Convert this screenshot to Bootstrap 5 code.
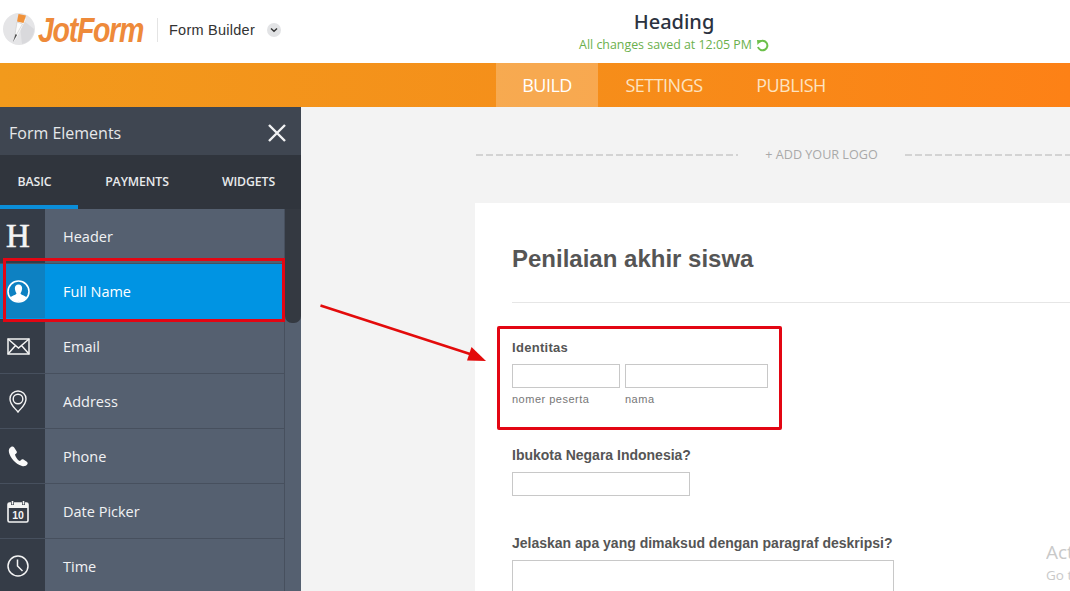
<!DOCTYPE html>
<html lang="en">
<head>
<meta charset="utf-8">
<title>JotForm Form Builder</title>
<link rel="stylesheet" href="https://cdn.jsdelivr.net/npm/bootstrap@5.3.0/dist/css/bootstrap.min.css">
<style>
html,body{height:591px;overflow:hidden}
body{font-family:"Open Sans","Noto Sans",sans-serif;background:#f3f3f3;position:relative}
.top-head{height:63px;background:#fff}
.brand-zone{width:296px;padding-left:2px;padding-bottom:4px}
.logo-word{font:italic 700 35px/1 "Liberation Sans",sans-serif;color:#ee8a3a;letter-spacing:-1.6px;margin-left:3px;width:107px;white-space:nowrap;transform:scaleX(.815);transform-origin:left center}
.brand-sep{width:1px;height:24px;background:#e4e4e4;margin:0 11px 0 12px}
.builder-label{font:14.5px "Liberation Sans",sans-serif;color:#333;letter-spacing:.25px}
.chev-dot{width:14px;height:14px;border-radius:50%;background:#e2e3e5;margin-left:12px}
.title-zone{width:756px;text-align:center}
.form-heading{font:500 20px/24px "Noto Sans",sans-serif;color:#2b3240;margin-top:10px}
.saved-note{font-size:12.4px;line-height:18px;color:#6ab04c;margin-top:2px}
.orange-bar{height:44px;background:linear-gradient(90deg,#f29a1c,#f58f1a 50%,#fd8116);padding-left:496px}
.orange-bar .nav-link{font-size:18px;line-height:44px;padding:0;color:#fde3c0;height:44px;text-align:center;letter-spacing:-.5px}
.orange-bar .nav-link.active{background:rgba(255,255,255,.24);color:#fff;width:102px}
.tab-set{width:132px}.tab-pub{width:122px}
.work-row{height:484px}
.side-panel{width:301px;background:#556070;flex:none}
.panel-title{height:48px;background:#3f4651;padding:3px 15px 0 9px;color:#e6e8ea;font-size:16px}
.panel-tabs{height:54px;background:#30353d}
.panel-tabs a{font-size:12.3px;font-weight:600;color:#e8eaec;text-decoration:none;height:54px;line-height:54px;text-align:center;letter-spacing:-.1px}
.panel-tabs .tab-basic{width:78px;border-bottom:4px solid #0b8ed9;padding-right:9px;line-height:54px}
.tab-pay{width:118px}.tab-wid{width:105px}
.elem-list{position:relative}
.elem-row{height:55px;background:transparent;border:0;border-bottom:1px solid #47505e;border-radius:0!important;padding:0;color:#f1f2f4;font-size:14.5px;width:285px;border-right:1px solid #47505e}
.elem-icon{width:45px;height:100%;background:#353c47;color:#fff;padding-right:9px}
.elem-name{padding-left:18px;padding-top:2px}
.elem-row.active{background:#0094e3;color:#fff;border-color:#0094e3;margin-top:0!important;border-top-width:0!important}
.elem-row.active .elem-icon{background:#0d81c2}
.h-glyph{font:400 33px/1 "Liberation Serif",serif;color:#f4f4f4;-webkit-text-stroke:.6px #f4f4f4}
.thumb-bar{position:absolute;left:285px;top:0;width:16px;height:114px;background:#343941;border-radius:0 0 7px 7px}
.canvas-area{min-width:0;flex:1;overflow:hidden}
.logo-slot{height:96px;padding-left:175px}
.logo-row{margin-top:38px;height:20px}
.dash-line{height:2px;background:repeating-linear-gradient(90deg,#d3d3d3 0 7px,transparent 7px 10px)}
.dash-a{width:262px}.dash-b{width:170px}
.logo-text{width:167px;text-align:center;font-size:12.6px;color:#a9a9a9;white-space:nowrap}
.paper{margin-left:174px;background:#fff;height:388px;padding:0 0 0 37px;font-family:"Liberation Sans",sans-serif;color:#555}
.paper-title{font-size:24px;font-weight:700;line-height:28px;padding-top:42px;height:100px;margin:0;border-bottom:1px solid #e6e6e6;color:#555}
.q-label{font-size:14px;font-weight:700;line-height:16px;color:#555;margin:0}
.q-one{font-size:13px;letter-spacing:.3px;padding-top:37px}
.input-pair{gap:5px;margin-top:8px}
.box-in{height:24px;border:1px solid #c8c8c8;border-radius:0;padding:0;background:#fff}
.in-a{width:108px}.in-b{width:143px}.in-c{width:178px}.in-d{width:382px;height:60px}
.sub-note{font-size:11px;color:#777;line-height:14px;letter-spacing:.5px;margin-top:4px}
.sub-a{width:113px}
.q-two{padding-top:41px;padding-bottom:9px}
.q-three{padding-top:39px;padding-bottom:9px}
.red-box{position:absolute;border:3px solid #e30613;pointer-events:none;z-index:5}
.box-full{left:3px;top:258px;width:282px;height:64px}
.box-id{left:497px;top:326px;width:285px;height:104px;border-radius:2px}
.point-arrow{position:absolute;left:315px;top:300px;width:180px;height:70px}
.win-mark{position:absolute;left:1046px;top:540px;color:#c9c9c9;white-space:nowrap;font-size:19px;line-height:24px;overflow:hidden;width:24px}
.win-sub{position:absolute;left:1046px;top:566px;color:#c9c9c9;white-space:nowrap;font-size:13.5px;line-height:18px;overflow:hidden;width:24px}
</style>
</head>
<body>
<header class="top-head d-flex">
  <div class="brand-zone d-flex align-items-center">
    <svg width="33" height="33" viewBox="0 0 33 33"><circle cx="17" cy="16" r="16" fill="#e5e5e7"/><path d="M17 4 L32 16 A15 15 0 0 1 20 31 Z" fill="#d9d9dc"/><path d="M18 4 L24 6 L14 26 L12 28 Z" fill="#f7f7f7"/><path d="M16.500 1 L24 2.500 L21.500 10 L15 8.500 Z" fill="#f0923a"/><path d="M15 9 L20.500 11 L12.500 25 Z" fill="#fbfbfb" stroke="#c9c9c9" stroke-width=".6"/><path d="M13.600 21 L15 22 L11 29 Z" fill="#4a4a4a"/></svg>
    <span class="logo-word">JotForm</span>
    <span class="brand-sep"></span>
    <span class="builder-label">Form Builder</span>
    <span class="chev-dot d-flex align-items-center justify-content-center"><svg width="8" height="6" viewBox="0 0 8 6"><path d="M1 1.500 L4 4.300 L7 1.500" fill="none" stroke="#333" stroke-width="1.400"/></svg></span>
  </div>
  <div class="title-zone">
    <div class="form-heading">Heading</div>
    <div class="saved-note d-flex justify-content-center align-items-center gap-1">All changes saved at 12:05 PM
      <svg width="13" height="13" viewBox="0 0 13 13"><path d="M3 3.300 A4.800 4.800 0 1 1 2 8" fill="none" stroke="#6cc04a" stroke-width="2"/><path d="M1 1 L5.500 1.300 L1.500 6 Z" fill="#6cc04a"/></svg>
    </div>
  </div>
</header>

<nav class="orange-bar nav">
  <a class="nav-link active" href="#">BUILD</a>
  <a class="nav-link tab-set" href="#">SETTINGS</a>
  <a class="nav-link tab-pub" href="#">PUBLISH</a>
</nav>

<div class="work-row d-flex">
  <aside class="side-panel">
    <div class="panel-title d-flex align-items-center justify-content-between">
      <span>Form Elements</span>
      <svg width="18" height="18" viewBox="0 0 18 18"><path d="M1 1 L17 17 M17 1 L1 17" stroke="#f2f3f4" stroke-width="2.400"/></svg>
    </div>
    <div class="panel-tabs d-flex">
      <a class="tab-basic" href="#">BASIC</a>
      <a class="tab-pay" href="#">PAYMENTS</a>
      <a class="tab-wid" href="#">WIDGETS</a>
    </div>
    <div class="elem-list">
      <div class="list-group">
        <div class="list-group-item elem-row d-flex align-items-center">
          <span class="elem-icon d-flex align-items-center justify-content-center"><span class="h-glyph">H</span></span>
          <span class="elem-name">Header</span>
        </div>
        <div class="list-group-item elem-row active d-flex align-items-center">
          <span class="elem-icon d-flex align-items-center justify-content-center">
            <svg width="23" height="23" viewBox="0 0 23 23"><circle cx="11.500" cy="11.500" r="10.500" fill="#0d81c2" stroke="#fff" stroke-width="1.600"/><path d="M11.500 4.500 C14.500 4.500 15.500 7 15 9.500 C14.700 11.500 13.800 12.500 13.500 13.500 C14 15 18 15.500 19.500 17.500 A10 10 0 0 1 3.500 17.500 C5 15.500 9 15 9.500 13.500 C9.200 12.500 8.300 11.500 8 9.500 C7.500 7 8.500 4.500 11.500 4.500 Z" fill="#fff"/></svg>
          </span>
          <span class="elem-name">Full Name</span>
        </div>
        <div class="list-group-item elem-row d-flex align-items-center">
          <span class="elem-icon d-flex align-items-center justify-content-center">
            <svg width="23" height="17" viewBox="0 0 23 17" fill="none" stroke="#f4f4f4" stroke-width="1.500"><rect x="1" y="1" width="21" height="15"/><path d="M1 1 L11.500 10 L22 1 M1 16 L8.500 7.500 M22 16 L14.500 7.500"/></svg>
          </span>
          <span class="elem-name">Email</span>
        </div>
        <div class="list-group-item elem-row d-flex align-items-center">
          <span class="elem-icon d-flex align-items-center justify-content-center">
            <svg width="18" height="23" viewBox="0 0 18 23" fill="none" stroke="#f4f4f4" stroke-width="1.400"><path d="M9 22 C6 18 1 15 1 9 A8 8 0 0 1 17 9 C17 15 12 18 9 22 Z"/><circle cx="9" cy="9" r="4.800"/></svg>
          </span>
          <span class="elem-name">Address</span>
        </div>
        <div class="list-group-item elem-row d-flex align-items-center">
          <span class="elem-icon d-flex align-items-center justify-content-center">
            <svg width="20" height="21" viewBox="0 0 20 21"><path d="M3 1 C1 2 0.500 4 1 6.500 C2 11 7 18 14 20 C16 20.600 18.500 20 19.500 18 C20 17 19.500 16.200 18.800 15.700 L15.500 13.500 C14.600 13 13.700 13.200 13 14 L12 15 C10 14.500 7.500 11 7 8.500 L8.200 7.500 C9 6.800 9 6 8.600 5.200 L6 1.200 C5.300 .3 4 .4 3 1 Z" fill="#fafafa"/></svg>
          </span>
          <span class="elem-name">Phone</span>
        </div>
        <div class="list-group-item elem-row d-flex align-items-center">
          <span class="elem-icon d-flex align-items-center justify-content-center">
            <svg width="22" height="23" viewBox="0 0 22 23"><rect x="1" y="3" width="20" height="19" rx="1.500" fill="none" stroke="#f4f4f4" stroke-width="1.600"/><rect x="1" y="3" width="20" height="5" fill="#f4f4f4"/><path d="M5.500 1 V5 M16.500 1 V5" stroke="#353c47" stroke-width="3"/><path d="M5.500 1 V4.500 M16.500 1 V4.500" stroke="#f4f4f4" stroke-width="1.600"/><text x="11" y="19" text-anchor="middle" font-family="Liberation Sans, sans-serif" font-weight="700" font-size="10.500" fill="#f4f4f4">10</text></svg>
          </span>
          <span class="elem-name">Date Picker</span>
        </div>
        <div class="list-group-item elem-row d-flex align-items-center">
          <span class="elem-icon d-flex align-items-center justify-content-center">
            <svg width="22" height="22" viewBox="0 0 22 22" fill="none" stroke="#f4f4f4" stroke-width="1.500"><circle cx="11" cy="11" r="10"/><path d="M10.500 4.500 V11 L15.500 16"/></svg>
          </span>
          <span class="elem-name">Time</span>
        </div>
      </div>
      <div class="thumb-bar"></div>
    </div>
  </aside>

  <main class="canvas-area">
    <div class="logo-slot d-flex align-items-start">
      <div class="logo-row d-flex align-items-center">
        <span class="dash-line dash-a"></span>
        <span class="logo-text">+ ADD YOUR LOGO</span>
        <span class="dash-line dash-b"></span>
      </div>
    </div>
    <section class="paper">
      <h1 class="paper-title">Penilaian akhir siswa</h1>
      <p class="q-label q-one">Identitas</p>
      <div class="input-pair d-flex">
        <input class="box-in in-a" type="text" aria-label="nomer peserta">
        <input class="box-in in-b" type="text" aria-label="nama">
      </div>
      <div class="d-flex">
        <span class="sub-note sub-a">nomer peserta</span>
        <span class="sub-note">nama</span>
      </div>
      <p class="q-label q-two">Ibukota Negara Indonesia?</p>
      <input class="box-in in-c d-block" type="text" aria-label="Ibukota">
      <p class="q-label q-three">Jelaskan apa yang dimaksud dengan paragraf deskripsi?</p>
      <textarea class="box-in in-d d-block" aria-label="Jelaskan"></textarea>
    </section>
  </main>
</div>

<div class="red-box box-full"></div>
<div class="red-box box-id"></div>
<svg class="point-arrow" viewBox="0 0 180 70"><path d="M5.500 5.500 L155 54" stroke="#e30b0b" stroke-width="2.500" fill="none"/><path d="M171 61 L152 60.500 L156.500 47 Z" fill="#e30b0b"/></svg>
<div class="win-mark">Activate</div>
<div class="win-sub">Go to Settings</div>

<script src="https://cdn.jsdelivr.net/npm/bootstrap@5.3.0/dist/js/bootstrap.bundle.min.js"></script>
</body>
</html>
